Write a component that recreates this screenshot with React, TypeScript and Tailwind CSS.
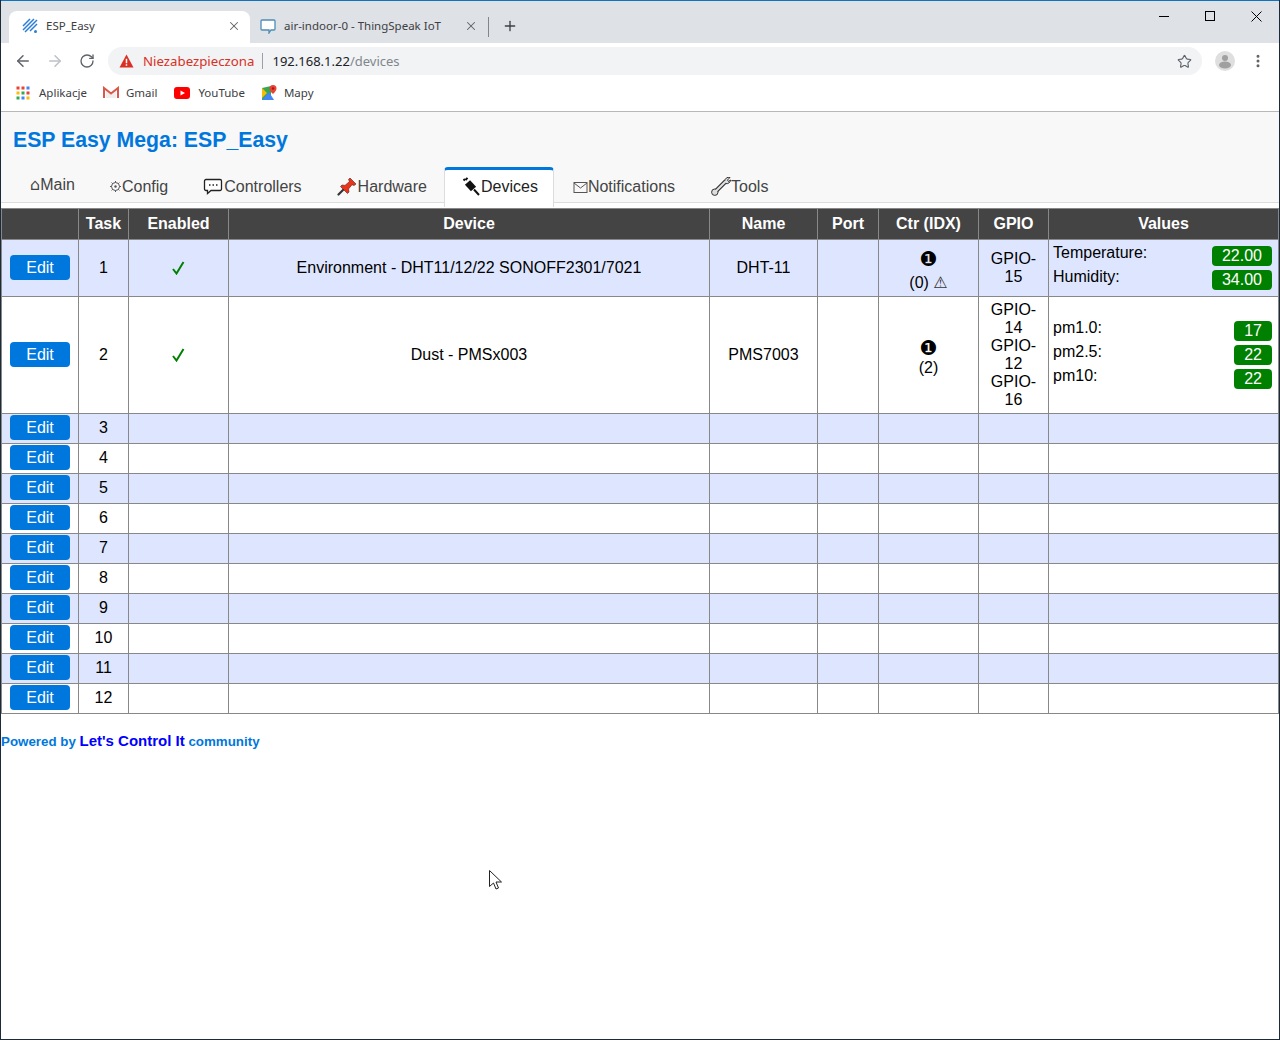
import React from "react";
import { ArrowLeft, ArrowRight, RotateCw, Star, X, Plus, EllipsisVertical } from "lucide-react";

const ui = "font-['Noto_Sans',sans-serif]";

const AppsGrid = () => (
  <svg width="14" height="14" viewBox="0 0 14 14" className="shrink-0">
    {[0, 5, 10].map((y, r) =>
      [0, 5, 10].map((x, c) => (
        <rect key={`${r}${c}`} x={x + 0.5} y={y + 0.5} width="3" height="3" fill={[["#ea4335", "#ea4335", "#4285f4"], ["#fbbc05", "#34a853", "#ea4335"], ["#34a853", "#4285f4", "#fbbc05"]][r][c]} />
      ))
    )}
  </svg>
);

const GmailIcon = () => (
  <svg width="16" height="13" viewBox="0 0 16 13" className="shrink-0">
    <path d="M3 12V5l5 4 5-4v7z" fill="#eee" />
    <path d="M1 12V2l7 5.500L15 2v10" fill="none" stroke="#d9584b" strokeWidth="2" />
  </svg>
);

const YoutubeIcon = () => (
  <svg width="16" height="12" viewBox="0 0 16 12" className="shrink-0">
    <rect width="16" height="12" rx="3" fill="#f00" />
    <path d="M6.500 3.500v5L11 6z" fill="#fff" />
  </svg>
);

const MapsIcon = () => (
  <svg width="16" height="16" viewBox="0 0 16 16" className="shrink-0">
    <path d="M1 3l9-2v13l-9 1z" fill="#34a853" />
    <path d="M1 15L8 7l5 8z" fill="#4285f4" />
    <path d="M1 3l5 5-5 5z" fill="#fbbc05" />
    <path d="M12 0a3.500 3.500 0 0 1 3.500 3.500C15.500 6 12 9 12 9S8.500 6 8.500 3.500A3.500 3.500 0 0 1 12 0z" fill="#ea4335" />
    <circle cx="12" cy="3.500" r="1.200" fill="#9c1c12" />
  </svg>
);

const EspFavicon = () => (
  <svg width="16" height="16" viewBox="0 0 16 16" className="shrink-0">
    <path d="M1 8l7-7M1 12L12 1M3 14L15 2M8 13l7-7" stroke="#2a7fd8" strokeWidth="1.500" fill="none" />
    <circle cx="13.500" cy="13.500" r="1.500" fill="#2a7fd8" />
  </svg>
);

const SpeechFavicon = () => (
  <svg width="16" height="16" viewBox="0 0 16 16" className="shrink-0">
    <path d="M2 2h12a1 1 0 0 1 1 1v8a1 1 0 0 1-1 1h-3l-2 3v-3H2a1 1 0 0 1-1-1V3a1 1 0 0 1 1-1z" fill="#fff" stroke="#4f8db5" strokeWidth="1.300" />
  </svg>
);

const WindowButtons = () => (
  <svg width="103" height="12" viewBox="0 0 103 12" className="mb-[21px] mr-[17px] shrink-0" shapeRendering="crispEdges">
    <path d="M0 6.500h10" stroke="#000" />
    <rect x="46.500" y="1.500" width="9" height="9" fill="none" stroke="#000" />
    <path d="M92.500 1.500l10 10M102.500 1.500l-10 10" stroke="#000" shapeRendering="auto" />
  </svg>
);

const GearIcon = () => (
  <svg width="13" height="13" viewBox="0 0 13 13" className="mt-[3px] shrink-0">
    <circle cx="6.500" cy="6.500" r="4" fill="none" stroke="#555" />
    <circle cx="6.500" cy="6.500" r="1.200" fill="#555" />
    <path d="M6.500 1v1.500M6.500 10.500V12M1 6.500h1.500M10.500 6.500H12M2.600 2.600l1 1M9.400 9.400l1 1M2.600 10.400l1-1M9.400 3.600l1-1" stroke="#555" />
  </svg>
);

const BubbleIcon = () => (
  <svg width="20" height="17" viewBox="0 0 20 17" className="mr-[1px] mt-[1px] shrink-0">
    <path d="M3 1.500h14a1.500 1.500 0 0 1 1.500 1.500v8a1.500 1.500 0 0 1-1.500 1.500H8L4.500 15.500v-3H3A1.500 1.500 0 0 1 1.500 11V3A1.500 1.500 0 0 1 3 1.500z" fill="#fff" stroke="#222" strokeWidth="1.300" />
    <path d="M6 7h1.500M9.500 7H11M13 7h1.500" stroke="#222" strokeWidth="1.500" />
  </svg>
);

const PinIcon = () => (
  <svg width="20" height="19" viewBox="0 0 20 19" className="mr-[1px] shrink-0">
    <path d="M1.500 17.500L7 12" stroke="#333" strokeWidth="2.200" strokeLinecap="round" />
    <path d="M13 1l6 6-2 1.500-2-.8-3.500 4.300.5 3-1.500 1.500-7-7L5 8l3 .4 4.500-3.900-1-2z" fill="#e8341c" stroke="#5a1a10" strokeWidth="0.600" />
  </svg>
);

const PlugIcon = () => (
  <svg width="18" height="19" viewBox="0 0 18 19" className="mr-[1px] shrink-0">
    <path d="M5.500 5.500L11.500 12" stroke="#111" strokeWidth="7" />
    <path d="M3 2L1.500 3.500M5.500 0.800L3.500 3M12 12.500l5 5.500" stroke="#111" strokeWidth="2" />
  </svg>
);

const MailIcon = () => (
  <svg width="15" height="11" viewBox="0 0 15 11" className="mt-[5px] shrink-0">
    <rect x="1" y="0.500" width="13" height="10" fill="none" stroke="#555" />
    <path d="M1 1l6.500 5L14 1" fill="none" stroke="#555" />
  </svg>
);

const WrenchIcon = () => (
  <svg width="20" height="19" viewBox="0 0 20 19" className="shrink-0">
    <path d="M4 15L15 4" stroke="#333" strokeWidth="4.500" />
    <circle cx="3.800" cy="15.200" r="3.200" fill="#ddd" stroke="#333" />
    <path d="M14 4.500a3.700 3.700 0 0 1 5-4l-2.500 2.500 1 1.500 2-1.500a3.800 3.800 0 0 1-5 3.500z" fill="#ddd" stroke="#333" />
    <path d="M5 14L15 4" stroke="#e4e4e4" strokeWidth="2" />
  </svg>
);

const Cursor = () => (
  <svg width="14" height="21" viewBox="0 0 14 21" className="absolute left-[488px] top-[870px]">
    <path d="M0.500 0.500v16l4-3.500 2.500 6 2.500-1-2.500-6h5.500z" fill="#fff" stroke="#222" />
  </svg>
);

const NavTab = ({ icon, label, active, className }: { icon: React.ReactNode; label: string; active?: boolean; className?: string }) => (
  <div
    className={`flex items-start text-[16px] leading-[20px] ${active ? "relative z-10 h-[40px] rounded-t-[4px] border-x border-t-[3px] border-x-[#ddd] border-t-[#0077dd] bg-white pl-[17px] pr-[15px] pt-[7px] text-[#222]" : "h-[35px] px-[18px] pt-[10px] text-[#444]"} ${className ?? ""}`}
  >
    {icon}
    {label}
  </div>
);

const Values = ({ rows }: { rows: [string, string][] }) => (
  <div className="px-1">
    {rows.map(([label, value]) => (
      <div key={label} className="flex h-6 items-start justify-between pr-[2px]">
        <span className="leading-[18px]">{label}</span>
        <span className="mt-0.5 h-5 rounded-[4px] bg-[#008000] px-[10px] text-[16px] leading-5 text-white">{value}</span>
      </div>
    ))}
  </div>
);

const th = "border border-[#888] bg-[#444] font-bold text-white";
const td = "border border-[#888] text-center";

const EditButton = () => (
  <button className="mx-auto -mt-[2px] block h-[25px] w-[60px] rounded-[4px] bg-[#0077dd] text-[16px] leading-[25px] text-white">Edit</button>
);

const Check = () => (
  <svg width="13" height="14" viewBox="0 0 13 14" className="mx-auto">
    <path d="M1 8l3.500 4.500L11.500 1" fill="none" stroke="#008000" strokeWidth="2" />
  </svg>
);

const Dot = () => <span className="font-['DejaVu_Sans',sans-serif] text-[20px] leading-[20px] text-black">❶</span>;

const emptyRows = [3, 4, 5, 6, 7, 8, 9, 10, 11, 12];

export default function App() {
  return (
    <div className="relative min-h-[1040px] border-x border-b border-[#1c2b3a] bg-white">
      <div className="h-px bg-[#0f74bd]" />
      {/* tab strip */}
      <div className={`flex h-[42px] items-end bg-[#dee1e6] pl-[8px] ${ui} text-[11.500px] text-[#3c4043]`}>
        <div className="flex h-[32px] w-[241px] items-center rounded-t-[8px] bg-white pb-[2px] pl-[13px] pr-[9px]">
          <EspFavicon />
          <span className="ml-[8px] flex-1 text-[#3c4043]">ESP_Easy</span>
          <X size={14} strokeWidth={1.800} className="text-[#5f6368]" />
        </div>
        <div className="flex h-[32px] w-[238px] items-center pb-[2px] pl-[10px] pr-[10px]">
          <SpeechFavicon />
          <span className="ml-[8px] flex-1">air-indoor-0 - ThingSpeak IoT</span>
          <X size={14} strokeWidth={1.800} className="text-[#5f6368]" />
        </div>
        <div className="mb-[6px] h-[20px] w-px bg-[#80868b]" />
        <Plus size={16} strokeWidth={2} className="mb-[9px] ml-[13px] text-[#3c4043]" />
        <div className="flex-1" />
        <WindowButtons />
      </div>
      {/* toolbar */}
      <div className={`flex h-[36px] items-center bg-white ${ui}`}>
        <ArrowLeft size={18} strokeWidth={2} className="ml-[13px] text-[#5f6368]" />
        <ArrowRight size={18} strokeWidth={2} className="ml-[14px] text-[#bdc1c6]" />
        <RotateCw size={16} strokeWidth={2} className="ml-[15px] text-[#5f6368]" />
        <div className="ml-[13px] flex h-[28px] w-[1094px] items-center rounded-full bg-[#f1f3f4] pl-[11px] pr-[10px] text-[13px]">
          <svg width="15" height="14" viewBox="0 0 16 15" className="shrink-0">
            <path d="M8 0.500L15.500 14.500H0.500z" fill="#d93025" />
            <path d="M7.200 5h1.600v5H7.200zM7.200 11h1.600v1.600H7.200z" fill="#fff" />
          </svg>
          <span className="ml-[9px] pt-[1px] text-[13.250px] text-[#d93025]">Niezabezpieczona</span>
          <span className="ml-[8px] mr-[9px] h-[16px] w-px bg-[#9aa0a6]" />
          <span className="pt-[1px] text-[#202124]">192.168.1.22</span>
          <span className="pt-[1px] text-[#80868b]">/devices</span>
          <div className="flex-1" />
          <Star size={15} strokeWidth={1.800} className="text-[#5f6368]" />
        </div>
        <div className="ml-[13px] flex h-[20px] w-[20px] items-center justify-center overflow-hidden rounded-full bg-[#dfdfdf]">
          <svg width="14" height="16" viewBox="0 0 14 16">
            <circle cx="7" cy="5" r="3" fill="#a0a0a0" />
            <ellipse cx="7" cy="12" rx="6" ry="3.500" fill="#a0a0a0" />
          </svg>
        </div>
        <EllipsisVertical size={16} strokeWidth={2.500} className="ml-[15px] text-[#5f6368]" />
      </div>
      {/* bookmarks */}
      <div className={`flex h-[33px] items-center border-b border-[#b8b8b8] pb-[5px] pl-[15px] ${ui} text-[11.500px] text-[#3c4043]`}>
        <AppsGrid />
        <span className="ml-[9px]">Aplikacje</span>
        <span className="ml-[16px]"><GmailIcon /></span>
        <span className="ml-[7px]">Gmail</span>
        <span className="ml-[17px]"><YoutubeIcon /></span>
        <span className="ml-[8px]">YouTube</span>
        <span className="ml-[16px]"><MapsIcon /></span>
        <span className="ml-[7px]">Mapy</span>
      </div>
      {/* page */}
      <div className="font-['Liberation_Sans',sans-serif] text-black">
        <div className="bg-[#f8f8f8]">
          <h1 className="pl-[12px] pt-[14px] text-[21.250px] font-bold leading-[28px] text-[#0077dd]">ESP Easy Mega: ESP_Easy</h1>
          <div className="mt-[13px] flex h-[36px] border-b border-[#ddd] pl-[12px]">
            <NavTab label="Main" className="w-[78px] -mt-[2px] !px-0" icon={<span className="ml-[17px] font-['DejaVu_Sans',sans-serif]">⌂</span>} />
            <NavTab label="Config" className="!pr-[17px]" icon={<GearIcon />} />
            <NavTab label="Controllers" className="!pr-[17px]" icon={<BubbleIcon />} />
            <NavTab label="Hardware" className="!pr-[17px]" icon={<PinIcon />} />
            <NavTab label="Devices" active icon={<PlugIcon />} />
            <NavTab label="Notifications" className="!pl-[19px]" icon={<MailIcon />} />
            <NavTab label="Tools" icon={<WrenchIcon />} />
          </div>
        </div>
        <div className="bg-white pt-[5px]">
          <table className="w-[1277px] table-fixed border-collapse text-[16px]">
            <colgroup>
              <col className="w-[77px]" />
              <col className="w-[50px]" />
              <col className="w-[100px]" />
              <col className="w-[481px]" />
              <col className="w-[108px]" />
              <col className="w-[61px]" />
              <col className="w-[100px]" />
              <col className="w-[70px]" />
              <col className="w-[230px]" />
            </colgroup>
            <thead>
              <tr className="h-[31px]">
                <th className={th}></th>
                <th className={th}>Task</th>
                <th className={th}>Enabled</th>
                <th className={th}>Device</th>
                <th className={th}>Name</th>
                <th className={th}>Port</th>
                <th className={th}>Ctr (IDX)</th>
                <th className={th}>GPIO</th>
                <th className={th}>Values</th>
              </tr>
            </thead>
            <tbody>
              <tr className="h-[57px] bg-[#dee6ff]">
                <td className={td}><EditButton /></td>
                <td className={td}>1</td>
                <td className={td}><Check /></td>
                <td className={td}>Environment - DHT11/12/22 SONOFF2301/7021</td>
                <td className={td}>DHT-11</td>
                <td className={td}></td>
                <td className={`${td} pt-[5px] leading-[18px]`}>
                  <div className="h-[25px]"><Dot /></div>
                  <div>(0) <span className="font-['DejaVu_Sans',sans-serif] text-[#333]">⚠</span></div>
                </td>
                <td className={`${td} leading-[18px]`}>GPIO-<br />15</td>
                <td className="border border-[#888]"><Values rows={[["Temperature:", "22.00"], ["Humidity:", "34.00"]]} /></td>
              </tr>
              <tr className="h-[117px] bg-white">
                <td className={td}><EditButton /></td>
                <td className={td}>2</td>
                <td className={td}><Check /></td>
                <td className={td}>Dust - PMSx003</td>
                <td className={td}>PMS7003</td>
                <td className={td}></td>
                <td className={`${td} pt-[5px] leading-[18px]`}>
                  <div className="h-[21px]"><Dot /></div>
                  <div>(2)</div>
                </td>
                <td className={`${td} leading-[18px]`}>GPIO-<br />14<br />GPIO-<br />12<br />GPIO-<br />16</td>
                <td className="border border-[#888]"><Values rows={[["pm1.0:", "17"], ["pm2.5:", "22"], ["pm10:", "22"]]} /></td>
              </tr>
              {emptyRows.map((n) => (
                <tr key={n} className={`h-[30px] ${n % 2 === 1 ? "bg-[#dee6ff]" : "bg-white"}`}>
                  <td className={td}><EditButton /></td>
                  <td className={`${td} pb-[2px]`}>{n}</td>
                  <td className={td}></td>
                  <td className={td}></td>
                  <td className={td}></td>
                  <td className={td}></td>
                  <td className={td}></td>
                  <td className={td}></td>
                  <td className={td}></td>
                </tr>
              ))}
            </tbody>
          </table>
          <p className="mt-[17px] text-[13.330px] font-bold leading-[20px] text-[#0077dd]">
            Powered by <span className="text-[15px] text-[#0000ff]">Let's Control It</span> community
          </p>
        </div>
      </div>
      <Cursor />
    </div>
  );
}
